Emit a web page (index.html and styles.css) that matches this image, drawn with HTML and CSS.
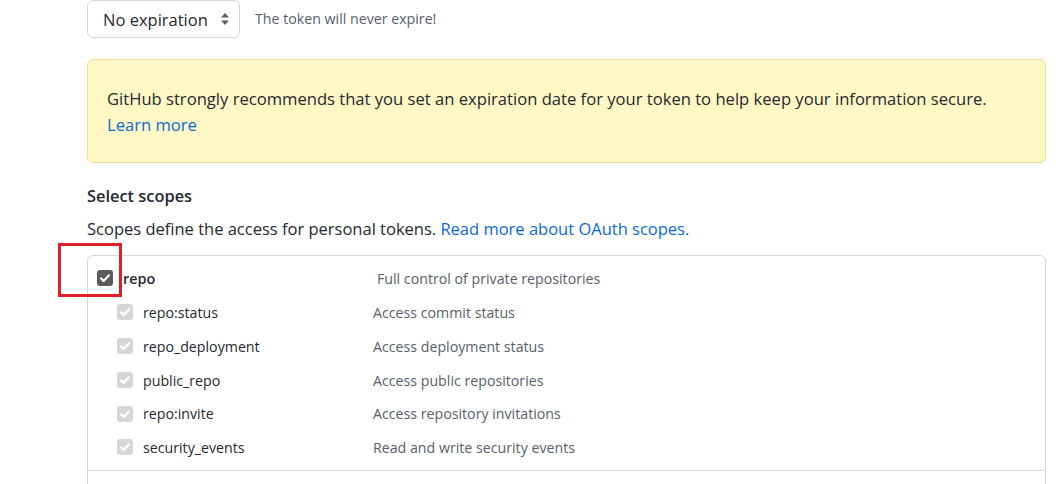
FILE: index.html
```html
<!DOCTYPE html>
<html lang="en">
<head>
<meta charset="utf-8">
<title>New personal access token</title>
<link rel="stylesheet" href="styles.css">
</head>
<body>
<main class="page">
  <div class="expiry">
    <div class="select">
      <span class="select-text">No expiration</span>
      <svg class="select-arrows" width="10" height="14" viewBox="0 0 10 14"><path d="M5 1L9 5.5H1Z M5 13L1 8.5H9Z" fill="#57606a"/></svg>
    </div>
    <span class="expiry-note">The token will never expire!</span>
  </div>

  <div class="flash">
    <p>GitHub strongly recommends that you set an expiration date for your token to help keep your information secure.</p>
    <a class="link" href="#">Learn more</a>
  </div>

  <h3 class="section-title">Select scopes</h3>
  <p class="section-desc">Scopes define the access for personal tokens. <a class="link" href="#">Read more about OAuth scopes.</a></p>

  <div class="scopes">
    <div class="group">
      <div class="row parent">
        <span class="cb cb-dark"><svg width="16" height="16" viewBox="0 0 16 16"><path d="M4 8.3l2.6 2.6L12 5.3" fill="none" stroke="#fff" stroke-width="2.2" stroke-linecap="round" stroke-linejoin="round"/></svg></span>
        <span class="label">repo</span>
        <span class="desc">Full control of private repositories</span>
      </div>
      <div class="children">
        <div class="row child">
          <span class="cb cb-light"><svg width="16" height="16" viewBox="0 0 16 16"><path d="M4 8.3l2.6 2.6L12 5.3" fill="none" stroke="#fff" stroke-width="2.2" stroke-linecap="round" stroke-linejoin="round"/></svg></span>
          <span class="label">repo:status</span>
          <span class="desc">Access commit status</span>
        </div>
        <div class="row child">
          <span class="cb cb-light"><svg width="16" height="16" viewBox="0 0 16 16"><path d="M4 8.3l2.6 2.6L12 5.3" fill="none" stroke="#fff" stroke-width="2.2" stroke-linecap="round" stroke-linejoin="round"/></svg></span>
          <span class="label">repo_deployment</span>
          <span class="desc">Access deployment status</span>
        </div>
        <div class="row child">
          <span class="cb cb-light"><svg width="16" height="16" viewBox="0 0 16 16"><path d="M4 8.3l2.6 2.6L12 5.3" fill="none" stroke="#fff" stroke-width="2.2" stroke-linecap="round" stroke-linejoin="round"/></svg></span>
          <span class="label">public_repo</span>
          <span class="desc">Access public repositories</span>
        </div>
        <div class="row child">
          <span class="cb cb-light"><svg width="16" height="16" viewBox="0 0 16 16"><path d="M4 8.3l2.6 2.6L12 5.3" fill="none" stroke="#fff" stroke-width="2.2" stroke-linecap="round" stroke-linejoin="round"/></svg></span>
          <span class="label">repo:invite</span>
          <span class="desc">Access repository invitations</span>
        </div>
        <div class="row child">
          <span class="cb cb-light"><svg width="16" height="16" viewBox="0 0 16 16"><path d="M4 8.3l2.6 2.6L12 5.3" fill="none" stroke="#fff" stroke-width="2.2" stroke-linecap="round" stroke-linejoin="round"/></svg></span>
          <span class="label">security_events</span>
          <span class="desc">Read and write security events</span>
        </div>
      </div>
    </div>
    <div class="group next"></div>
    <div class="annotation"></div>
  </div>
</main>
</body>
</html>
```

FILE: styles.css
```css
* { box-sizing: border-box; }

html, body {
  margin: 0;
  padding: 0;
  background: #ffffff;
  overflow: hidden;
}

body {
  font-family: "Open Sans", "Noto Sans", "Liberation Sans", sans-serif;
  color: #24292f;
  width: 1063px;
  height: 484px;
}

.page {
  padding-left: 87px;
  width: 1046px;
}

.expiry {
  display: flex;
  align-items: center;
  gap: 15px;
  height: 38px;
}

.select {
  display: flex;
  align-items: center;
  justify-content: space-between;
  width: 153px;
  height: 38px;
  padding: 0 9px 0 15px;
  border: 1px solid #d0d7de;
  border-radius: 6px;
  background: #ffffff;
}

.select-text {
  font-size: 16.5px;
  color: #24292f;
}

.select-arrows { display: block; }

.expiry-note {
  font-size: 14.2px;
  color: #57606a;
  margin-top: -2px;
}

.flash {
  margin-top: 21px;
  padding: 26px 19px 21px;
  height: 104px;
  background: #fff8c5;
  border: 1px solid #f0dc9a;
  border-radius: 6px;
  font-size: 16.6px;
  line-height: 26px;
}

.flash p { margin: 0; }

.link {
  color: #0969da;
  text-decoration: none;
}

.section-title {
  margin: 21px 0 0;
  font-size: 16.4px;
  font-weight: 600;
  line-height: 24px;
}

.section-desc {
  margin: 9px 0 0;
  font-size: 16.5px;
  line-height: 24px;
}

.scopes {
  position: relative;
  margin-top: 14px;
  border: 1px solid #d0d7de;
  border-radius: 6px;
  height: 240px;
}

.group {
  padding: 11px 10px 6px 9px;
  border-bottom: 1px solid #d0d7de;
}

.group.next { border-bottom: none; padding: 0; }

.row {
  display: flex;
  align-items: center;
  font-size: 14.2px;
}

.parent { height: 22px; }

.children {
  padding-left: 20px;
  margin-top: 6px;
}

.child { height: 34px; }

.child:nth-child(n+4) { height: 33.5px; }

.cb {
  display: flex;
  width: 16px;
  height: 16px;
  border-radius: 3px;
  flex-shrink: 0;
}

.cb svg { display: block; }

.cb-dark { background: #5b5b5b; }

.cb-light { background: #d6d6d6; }

.label {
  margin-left: 10px;
  color: #24292f;
}

.parent .label {
  width: 254px;
  font-weight: 600;
  font-size: 14.4px;
}

.child .label { width: 230px; }

.desc { color: #57606a; }

.annotation {
  position: absolute;
  left: -30px;
  top: -13px;
  width: 64px;
  height: 54px;
  border: 3px solid #e3202a;
}
```
